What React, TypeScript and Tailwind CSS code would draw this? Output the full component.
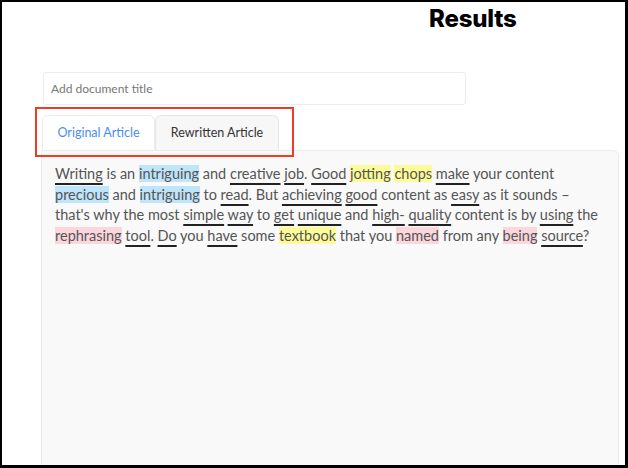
import React from "react";

type Seg = { t: string; k?: "u" | "b" | "y" | "p" };

const lines: Seg[][] = [
  [
    { t: "Writing", k: "u" }, { t: " is an " }, { t: "intriguing", k: "b" }, { t: " and " },
    { t: "creative", k: "u" }, { t: " " }, { t: "job", k: "u" }, { t: ". " }, { t: "Good", k: "u" }, { t: " " },
    { t: "jotting", k: "y" }, { t: " " }, { t: "chops", k: "y" }, { t: " " }, { t: "make", k: "u" }, { t: " your content" },
  ],
  [
    { t: "precious", k: "b" }, { t: " and " }, { t: "intriguing", k: "b" }, { t: " to " }, { t: "read", k: "u" },
    { t: ". But " }, { t: "achieving", k: "u" }, { t: " " }, { t: "good", k: "u" }, { t: " content as " },
    { t: "easy", k: "u" }, { t: " as it sounds –" },
  ],
  [
    { t: "that's why the most " }, { t: "simple", k: "u" }, { t: " " }, { t: "way", k: "u" }, { t: " to " },
    { t: "get", k: "u" }, { t: " " }, { t: "unique", k: "u" }, { t: " and " }, { t: "high-", k: "u" }, { t: " " },
    { t: "quality", k: "u" }, { t: " content is by " }, { t: "using", k: "u" }, { t: " the" },
  ],
  [
    { t: "rephrasing", k: "p" }, { t: " " }, { t: "tool", k: "u" }, { t: ". " }, { t: "Do", k: "u" }, { t: " you " },
    { t: "have", k: "u" }, { t: " some " }, { t: "textbook", k: "y" }, { t: " that you " }, { t: "named", k: "p" },
    { t: " from any " }, { t: "being", k: "p" }, { t: " " }, { t: "source", k: "u" }, { t: "?" },
  ],
];

function Word({ s }: { s: Seg }) {
  if (s.k === "u")
    return (
      <span className="underline decoration-[#222] decoration-2 underline-offset-[4px]">{s.t}</span>
    );
  if (s.k === "b") return <span className="bg-[#bfe5fb]">{s.t}</span>;
  if (s.k === "y") return <span className="bg-[#fdfb98]">{s.t}</span>;
  if (s.k === "p") return <span className="bg-[#fcd6dd]">{s.t}</span>;
  return <>{s.t}</>;
}

export default function App() {
  return (
    <div
      className="relative w-[628px] h-[468px] overflow-hidden bg-white border-l-2 border-t-2 border-r-[3px] border-b-[3px] border-black"
      style={{ fontFamily: "Lato, 'Open Sans', sans-serif" }}
    >
      <div
        className="pl-[427px] pt-[2px] h-[70px] text-[24px] leading-[30px] font-extrabold text-black tracking-[-0.2px]"
        style={{ fontFamily: "Inter, Lato, sans-serif" }}
      >
        Results
      </div>
      <div className="ml-[41px] w-[423px] h-[33px] border border-[#ececec] rounded-[3px] flex items-center pl-[7px] text-[12px] text-[#777]">
        Add document title
      </div>
      <div className="mt-[10px] ml-[40px] flex">
        <div className="w-[113px] h-[35px] bg-white border border-b-0 border-[#ececec] rounded-t-[6px] flex items-center justify-center text-[12.5px] text-[#4a8cf5]">
          Original Article
        </div>
        <div className="w-[124px] h-[35px] bg-[#f7f7f7] border border-b-0 border-[#e6e6e6] rounded-t-[6px] flex items-center justify-center text-[12.5px] text-[#333]">
          Rewritten Article
        </div>
      </div>
      <div className="ml-[39px] w-[578px] h-[330px] bg-[#f9f9f9] border border-[#ececec] rounded-tr-[6px] pl-[13px] pt-[13px] text-[14.5px] leading-[20.7px] text-[#555]">
        {lines.map((l, i) => (
          <div key={i} className="whitespace-nowrap">
            {l.map((s, j) => (
              <Word key={j} s={s} />
            ))}
          </div>
        ))}
      </div>
      <div className="absolute left-[33px] top-[105px] w-[259px] h-[50px] border-2 border-[#ea3f26] pointer-events-none" />
    </div>
  );
}
